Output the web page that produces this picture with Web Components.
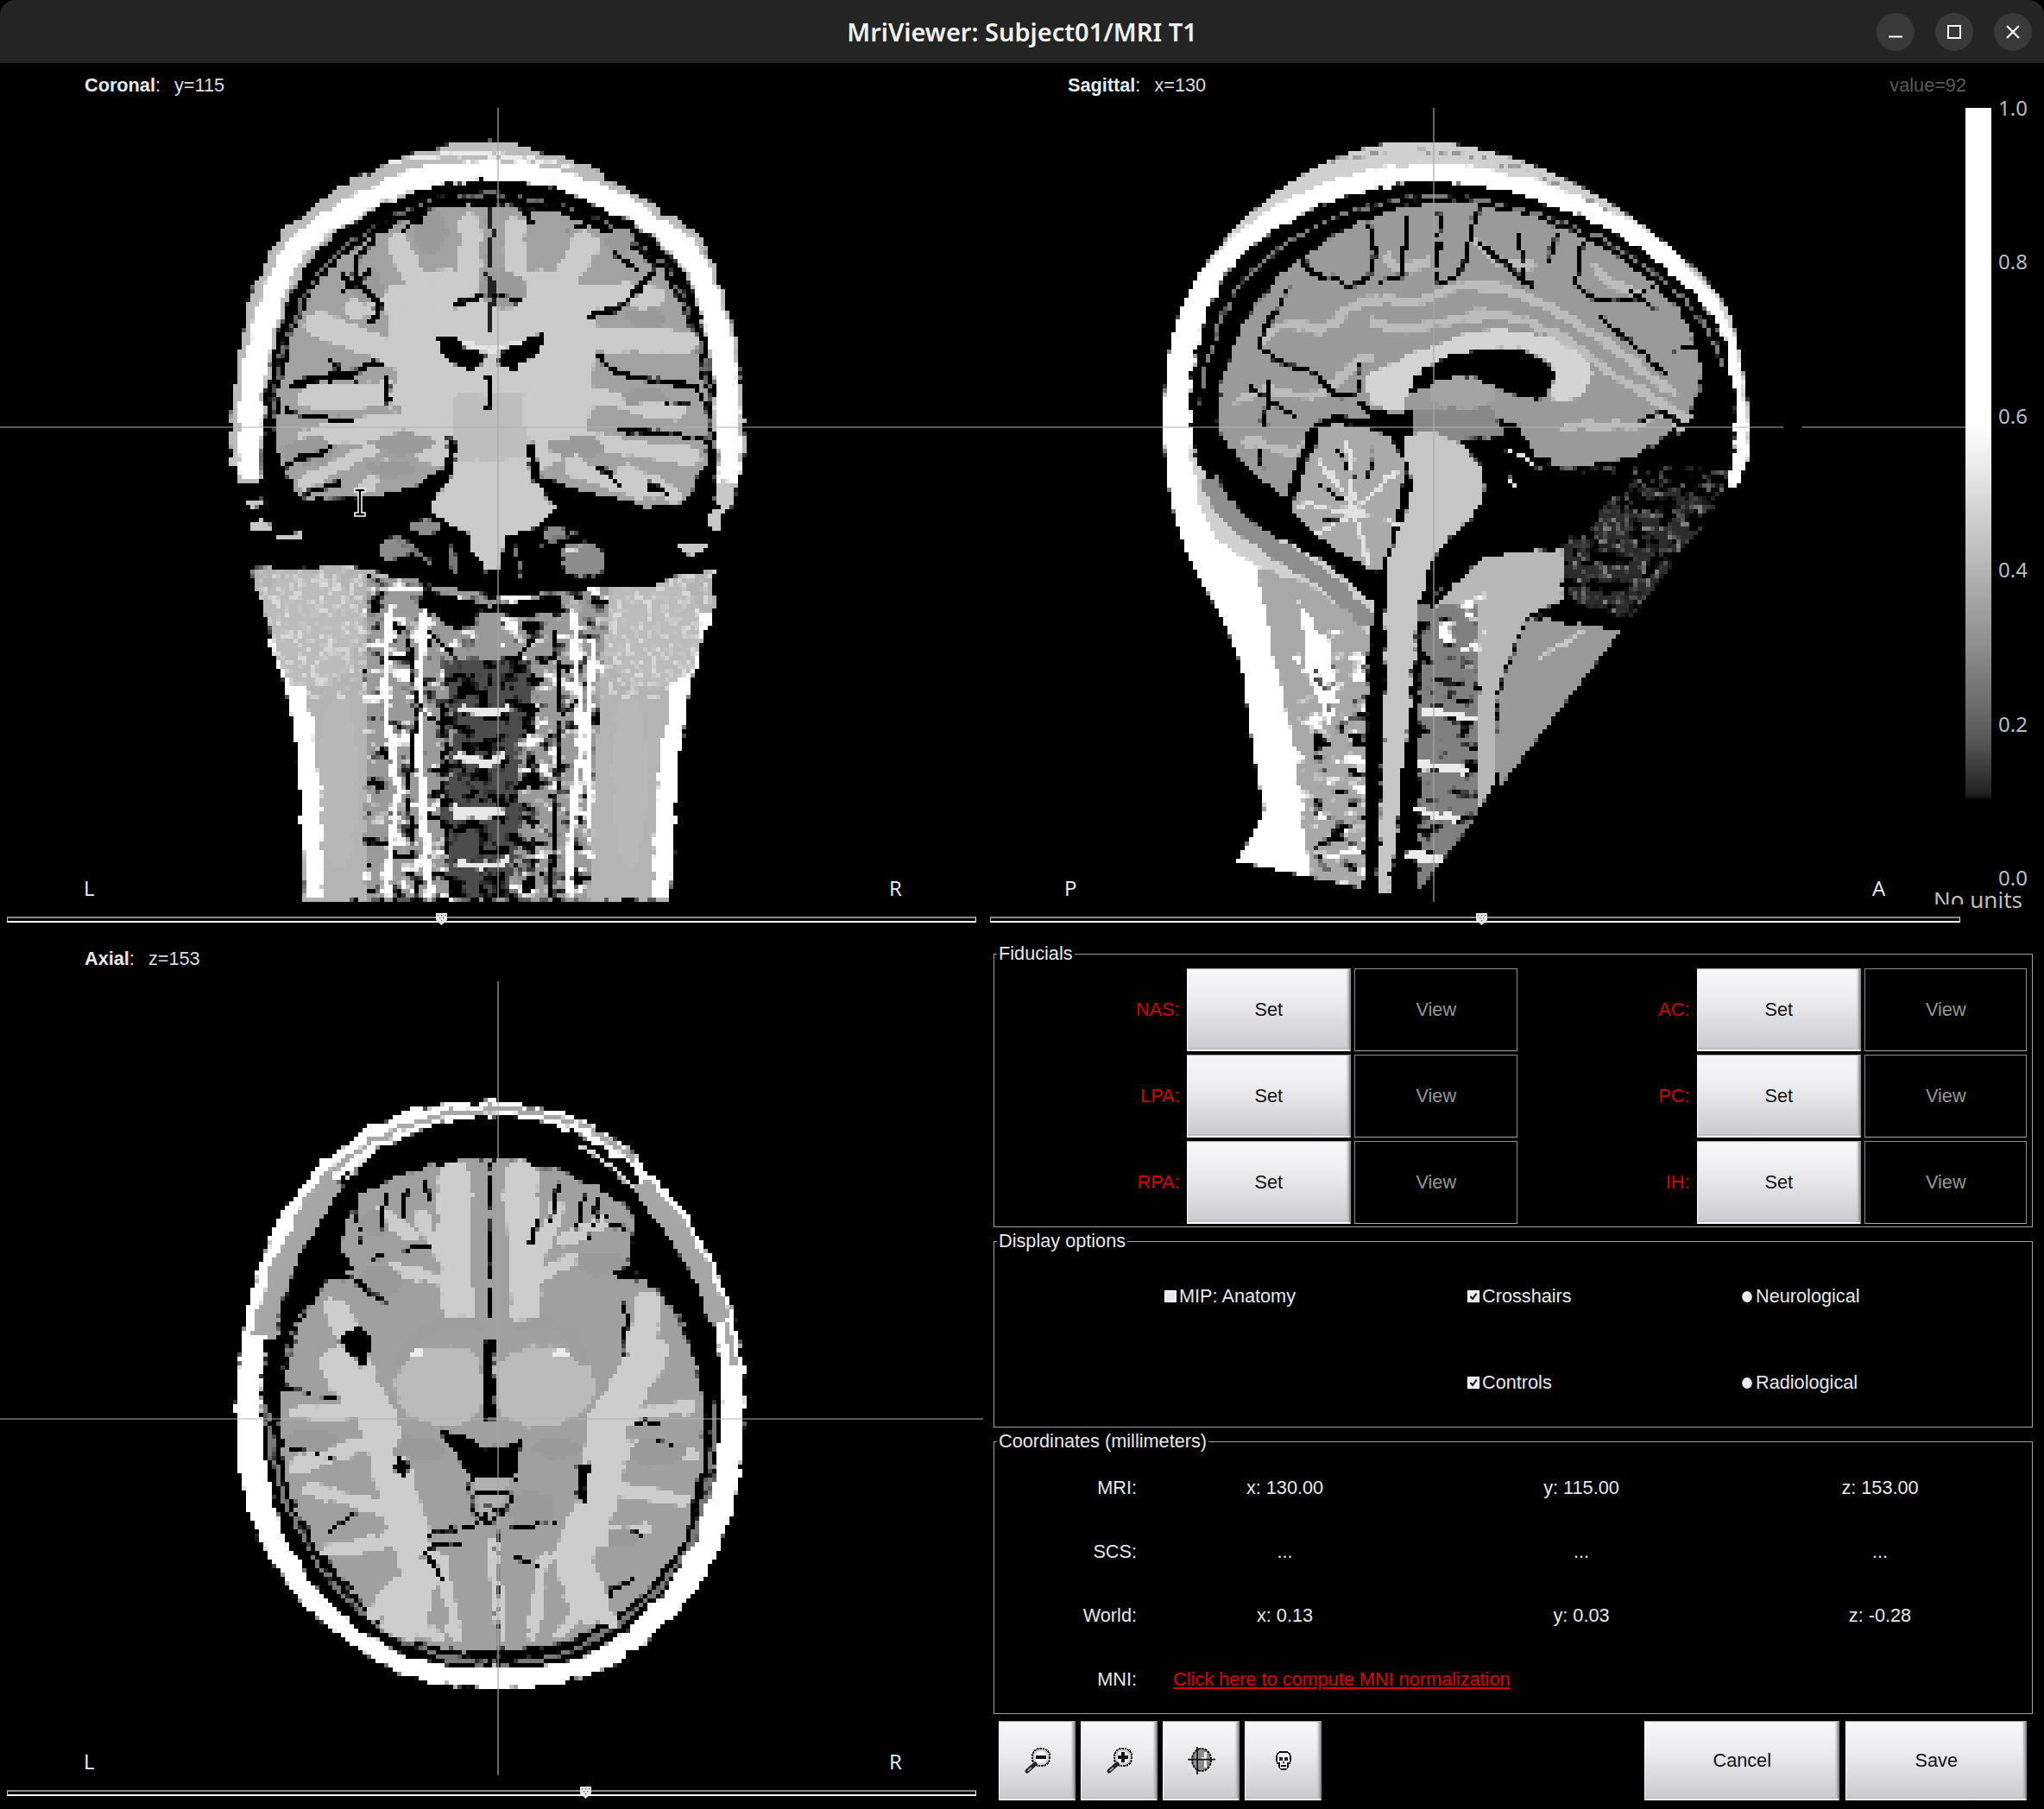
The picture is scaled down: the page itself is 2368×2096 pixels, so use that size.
<!DOCTYPE html>
<html><head><meta charset="utf-8"><title>MriViewer</title>
<style>
html,body{margin:0;padding:0;background:#000;}
body{width:2368px;height:2096px;overflow:hidden;font-family:"Liberation Sans",Arial,sans-serif;}
</style></head>
<body>
<mri-window>
  <mri-titlebar slot="title">MriViewer: Subject01/MRI T1</mri-titlebar>
  <mri-slice slot="coronal" name="Coronal" pos="y=115" left="L" right="R" lx="97" rx="1030" thumb="496" track-l="8" track-r="16">
    <mri-coronal></mri-coronal>
  </mri-slice>
  <mri-slice slot="sagittal" name="Sagittal" pos="x=130" left="P" right="A" lx="86" rx="1022" thumb="562" track-l="0" track-r="6" label-x="90" value="value=92">
    <mri-sagittal></mri-sagittal>
  </mri-slice>
  <mri-colorbar slot="colorbar"></mri-colorbar>
  <mri-slice slot="axial" name="Axial" pos="z=153" left="L" right="R" lx="97" rx="1030" thumb="663" track-l="8" track-r="16" head-top="10">
    <mri-axial></mri-axial>
  </mri-slice>
  <mri-panel slot="panel"></mri-panel>
</mri-window>

<script>
const def=(n,html,init)=>customElements.define(n,class extends HTMLElement{
  constructor(){super();this.attachShadow({mode:'open'});}
  connectedCallback(){if(!this.shadowRoot.firstChild)this.shadowRoot.innerHTML=typeof html==='function'?html(this):html;if(init)init(this);}
});

const FILT=(w,h,px)=>`<defs>
<filter id="pix" filterUnits="userSpaceOnUse" x="0" y="0" width="${w}" height="${h}" color-interpolation-filters="sRGB">
 <feFlood x="2" y="2" width="1" height="1" flood-color="#000"/>
 <feComposite x="0" y="0" width="${px}" height="${px}"/>
 <feTile result="a"/>
 <feComposite in="SourceGraphic" in2="a" operator="in"/>
 <feMorphology operator="dilate" radius="2"/>
</filter>
<filter id="wob" filterUnits="userSpaceOnUse" x="0" y="0" width="${w}" height="${h}" color-interpolation-filters="sRGB">
 <feTurbulence type="fractalNoise" baseFrequency=".05" numOctaves="2" seed="4" result="n"/>
 <feDisplacementMap in="SourceGraphic" in2="n" scale="13" xChannelSelector="R" yChannelSelector="G"/>
</filter>
<filter id="wobs" filterUnits="userSpaceOnUse" x="100" y="100" width="1200" height="1500" color-interpolation-filters="sRGB">
 <feTurbulence type="fractalNoise" baseFrequency=".04" numOctaves="2" seed="9" result="n"/>
 <feDisplacementMap in="SourceGraphic" in2="n" scale="15" xChannelSelector="R" yChannelSelector="G"/>
</filter>
<filter id="blk" x="0" y="0" width="1" height="1" color-interpolation-filters="sRGB">
 <feTurbulence type="fractalNoise" baseFrequency=".03 .05" numOctaves="2" seed="7"/>
 <feColorMatrix values="0 0 0 0 0 0 0 0 0 0 0 0 0 0 0 9 0 0 0 -5.1"/>
</filter>
<filter id="wht" x="0" y="0" width="1" height="1" color-interpolation-filters="sRGB">
 <feTurbulence type="fractalNoise" baseFrequency=".03 .05" numOctaves="2" seed="21"/>
 <feColorMatrix values="0 0 0 0 1 0 0 0 0 1 0 0 0 0 1 9 0 0 0 -5"/>
</filter>
<filter id="blk2" x="0" y="0" width="1" height="1" color-interpolation-filters="sRGB">
 <feTurbulence type="fractalNoise" baseFrequency=".045" numOctaves="2" seed="11"/>
 <feColorMatrix values="0 0 0 0 0 0 0 0 0 0 0 0 0 0 0 9 0 0 0 -4.5"/>
</filter>
<filter id="fine" x="0" y="0" width="1" height="1" color-interpolation-filters="sRGB">
 <feTurbulence type="fractalNoise" baseFrequency=".09" numOctaves="2" seed="3"/>
 <feColorMatrix values="0 0 0 0 1 0 0 0 0 1 0 0 0 0 1 6 0 0 0 -3.1"/>
</filter>
</defs>`;
const HOST=`<style>:host{display:block;width:100%;height:100%}svg{display:block;width:100%;height:100%}</style>`;

/* ---------- Coronal slice (drawn in the zoom coordinate frame) ---------- */
def('mri-coronal',HOST+`<svg viewBox="0 0 1147 920" width="1147" height="920">${FILT(1147,920,5)}
<clipPath id="neck"><path d="M410 1030C440 1120 470 1200 462 1487L1028 1487C1020 1300 1030 1180 1060 1100L1095 1000L1095 940L1000 965L760 985L530 935L388 940Z"/></clipPath>
<clipPath id="neckc"><path d="M560 950L940 950L920 1130L905 1487L560 1487Z"/></clipPath>
<g filter="url(#pix)"><g filter="url(#wob)"><g transform="translate(0,-125) scale(.7553,.7018)">
 <path fill="#bcbcbc" d="M355 740C352 600 380 470 435 380C520 300 620 238 740 234C860 235 990 320 1075 395C1120 480 1145 620 1140 760C1138 785 1133 800 1125 812L1105 812L1098 790L405 790L395 800L365 800Z"/>
 <path fill="none" stroke="#fff" stroke-width="33" d="M384 790C375 640 400 500 455 410C530 330 640 282 745 280C860 282 980 340 1055 415C1105 500 1125 640 1118 800"/>
 <path fill="none" stroke="#ececec" stroke-width="6" d="M600 270C660 250 800 248 880 280"/>
 <path fill="#000" d="M403 800C395 640 430 480 490 410C560 340 650 298 750 297C860 298 960 350 1035 425C1085 510 1105 640 1098 800L1075 870L1040 920L1000 975L760 985L520 950L430 880Z"/>
 <path fill="none" stroke="#6e6e6e" stroke-width="4" d="M417 720C417 600 450 490 510 425C580 360 660 322 750 320C860 322 950 370 1020 440C1070 520 1090 620 1090 720"/>
 <path fill="#a2a2a2" d="M425 720C425 620 445 510 510 440C570 385 650 340 745 338L755 338C860 340 950 385 1015 450C1065 520 1085 620 1085 720C1085 770 1070 810 1040 835C990 840 930 825 860 800C835 790 820 770 815 750L810 730L815 780C830 810 850 820 850 840C830 870 800 880 780 885L760 945L745 945L722 885C700 875 670 860 660 835C680 810 695 780 690 745C685 735 680 750 670 780C640 815 560 825 480 825C445 810 425 770 425 720Z"/>
 <!-- white matter -->
 <g fill="none" stroke="#cbcbcb" stroke-linecap="round" stroke-linejoin="round">
  <path stroke-width="170" d="M680 530L700 690M830 530L820 690"/>
  <path stroke-width="130" d="M750 700L750 810"/>
  <path stroke-width="34" d="M650 500L610 400M640 480L545 510M790 470L790 375M720 460L720 370"/>
  <path stroke-width="40" d="M620 590L490 535M620 650L480 655M600 700L475 725"/>
  <path stroke-width="24" d="M570 740L470 795M590 770L560 805"/>
  <path stroke-width="40" d="M850 500L900 400M870 490L1000 490M880 560L1050 565"/>
  <path stroke-width="28" d="M860 640L1040 682M890 725L1060 755M880 770L980 812M960 780L1030 818"/>
 </g>
 <path fill="#cbcbcb" d="M660 835C680 810 700 780 700 740L810 740C815 780 830 810 850 840C830 870 800 880 780 885L760 945L745 945L722 885C700 875 670 860 660 835Z"/>
 <path fill="#bebebe" d="M700 650L800 650L815 760L690 760Z"/>
 <!-- gray ribbons -->
 <g fill="#9a9a9a"><ellipse cx="620" cy="733" rx="46" ry="18"/><ellipse cx="885" cy="738" rx="44" ry="18"/><ellipse cx="600" cy="775" rx="38" ry="14"/><ellipse cx="660" cy="385" rx="26" ry="38"/><ellipse cx="770" cy="478" rx="38" ry="32"/><ellipse cx="470" cy="745" rx="38" ry="22"/><ellipse cx="990" cy="655" rx="35" ry="13"/><ellipse cx="565" cy="475" rx="22" ry="28"/><ellipse cx="950" cy="395" rx="20" ry="20"/><ellipse cx="990" cy="525" rx="30" ry="15"/></g>
 <!-- sulci -->
 <g fill="none" stroke="#000" stroke-linecap="round" stroke-linejoin="round" stroke-width="8">
  <path stroke-width="12" d="M452 635L520 618L585 600"/>
  <path d="M510 598L545 628M590 620L595 660"/>
  <path stroke-width="10" d="M575 400C552 420 530 440 552 470C570 490 600 510 570 528"/>
  <path d="M525 480L565 450M480 440L510 400M520 455L545 470"/>
  <path d="M440 680L540 695M435 770L510 740M470 810L520 800"/>
  <path stroke-width="10" d="M920 590L960 622L1020 628L1065 640"/>
  <path stroke-width="10" d="M1000 450L960 500L905 525"/>
  <path d="M945 420L975 445M1060 640L1075 660"/>
  <path d="M950 708L1080 725M1020 660L1060 672M1000 800L1020 820M920 770L950 800"/>
  <path d="M800 345L815 370M650 350L620 380M870 380L900 370"/>
  <path stroke-width="7" d="M695 505L745 485L795 495"/>
 </g>
 <path stroke="#222" stroke-width="8" d="M752 340L752 545"/>
 <path fill="#000" d="M672 555C690 550 710 570 742 585C745 605 725 625 705 600C690 600 670 580 672 555Z"/>
 <path fill="#000" d="M832 552C815 548 795 570 765 585C760 605 780 620 795 605C815 595 835 575 832 552Z"/>
 <path fill="none" stroke="#e4e4e4" stroke-width="7" d="M705 565Q752 590 800 562"/>
 <path stroke="#000" stroke-width="9" d="M750 620L750 680"/>
 <path fill="none" stroke="#000" stroke-width="13" d="M690 722C697 760 690 795 662 812M816 728C810 770 825 795 852 815"/>
 <!-- under-temporal dark region -->
 <g fill="#8c8c8c"><ellipse cx="610" cy="905" rx="26" ry="20"/><ellipse cx="895" cy="925" rx="35" ry="28"/><ellipse cx="650" cy="870" rx="24" ry="13"/><ellipse cx="850" cy="880" rx="18" ry="12"/></g>
 <g fill="none" stroke="#777" stroke-width="6"><path d="M600 880L660 930M830 900L880 880M690 900L700 950M790 900L800 960"/></g>
 <path stroke="#ddd" stroke-width="5" d="M860 915L890 905"/>
 <!-- scalp fragments -->
 <g fill="#c8c8c8"><ellipse cx="360" cy="763" rx="9" ry="10"/><ellipse cx="395" cy="830" rx="16" ry="6"/><ellipse cx="400" cy="868" rx="18" ry="10"/><ellipse cx="445" cy="885" rx="24" ry="7"/><ellipse cx="1110" cy="820" rx="16" ry="28"/><ellipse cx="1060" cy="905" rx="24" ry="10"/><ellipse cx="1095" cy="860" rx="10" ry="14"/></g>
 <!-- neck -->
 <path fill="#b4b4b4" d="M410 1030C440 1120 470 1200 462 1487L1028 1487C1020 1300 1030 1180 1060 1100L1095 1000L1095 940L1000 965L760 985L530 935L388 940Z"/>
 <path fill="none" stroke="#fff" stroke-width="30" d="M425 1050C450 1120 480 1200 482 1480M1078 1010C1050 1090 1025 1180 1015 1480"/>
 <g clip-path="url(#neck)">
  <g fill="#b8b8b8"><ellipse cx="520" cy="1290" rx="30" ry="145"/><ellipse cx="965" cy="1290" rx="28" ry="145"/></g>
  <ellipse cx="470" cy="1040" rx="85" ry="96" fill="#bcbcbc"/><ellipse cx="1000" cy="1040" rx="76" ry="96" fill="#bcbcbc"/>
  <rect x="380" y="930" width="730" height="220" filter="url(#fine)" opacity=".45"/>
  <g clip-path="url(#neckc)">
   <rect x="560" y="950" width="380" height="540" fill="#9a9a9a"/>
   <rect x="560" y="950" width="380" height="540" filter="url(#wht)"/>
   <rect x="560" y="950" width="380" height="540" filter="url(#blk)"/>
   <g fill="none" stroke="#fff" stroke-width="12"><path d="M600 1000L590 1150L610 1300L590 1480M650 1010L640 1200L660 1480M880 1010L890 1200L870 1480M910 1050L900 1250L920 1480"/></g>
   <g fill="none" stroke="#000" stroke-width="6"><path d="M622 1040L640 1160L625 1300L640 1480M852 1040L860 1200L845 1480M660 1040L700 1090M830 1040L790 1090"/></g>
   <path fill="#4c4c4c" d="M680 1090L810 1090L820 1190L790 1220L800 1340L780 1480L690 1480L680 1340L700 1200Z"/>
   <rect x="680" y="1090" width="140" height="390" filter="url(#blk2)"/>
   <path fill="#000" d="M650 970L750 1000L860 980L870 1010L800 1020L750 1010L700 1040L640 1000Z"/>
   <path fill="#999" d="M735 1010L765 1010L770 1090L730 1090Z"/>
   <g fill="none" stroke="#e8e8e8" stroke-width="14"><path d="M705 1165Q745 1190 785 1165M700 1245Q735 1270 775 1245M695 1335Q730 1355 775 1335M700 1420Q735 1440 780 1420"/></g>
  </g>
 </g>
</g></g></g>
<path d="M577 0V920" stroke="#a8a8a8" stroke-width="1.2"/>
<path d="M0 370H1147" stroke="#b4b4b4" stroke-width="1.2"/>
<g transform="translate(417,457)" fill="#000" stroke="#fff" stroke-width="1.5"><path d="M-6 -16H6V-12H2V12H6V16H-6V12H-2V-12H-6Z"/></g>
</svg>`);

/* ---------- Sagittal slice ---------- */
def('mri-sagittal',HOST+`<svg viewBox="0 0 1130 920" width="1130" height="920">${FILT(1130,920,5)}
<clipPath id="cut"><path d="M330 1422L372 1340C360 1280 350 1210 340 1120C330 1060 290 990 260 930C230 860 216 780 218 680C220 560 240 490 300 410C370 320 470 240 600 232C720 235 850 290 950 370C1010 420 1070 470 1090 530C1110 620 1120 700 1117 750L1100 795L1065 838L598 1487L545 1472Z"/></clipPath>
<g filter="url(#pix)"><g transform="translate(37,-125) scale(.7553,.7018)">
<g clip-path="url(#cut)"><g filter="url(#wobs)">
 <rect x="100" y="100" width="1200" height="1500" fill="#d0d0d0"/>
 <path fill="#fff" d="M300 1440L372 1340C360 1280 340 1210 330 1120C320 1060 280 990 250 930C220 860 206 780 208 680C210 560 230 490 290 425C360 345 470 278 620 270C740 270 870 320 960 380C1020 430 1090 500 1100 600C1110 680 1120 730 1105 790L1060 850L1085 790C1095 740 1095 660 1085 590C1070 510 1000 450 930 400C840 340 720 300 620 300C500 305 400 360 330 430C280 500 250 600 258 720C262 800 280 870 300 890L420 980L560 1480Z"/>
 <path fill="none" stroke="#999" stroke-width="4" stroke-dasharray="14 8" d="M330 340C420 270 520 245 620 250C730 255 830 300 920 360"/>
 <path fill="#000" d="M258 720C250 600 280 500 330 430C400 360 500 305 620 300C720 300 840 340 930 400C1000 450 1070 510 1085 590C1095 660 1095 740 1085 790L1065 850L930 1040L735 1310L700 1355L600 1500L545 1485L540 1000L480 940C420 890 340 880 290 820Z"/>
 <path fill="none" stroke="#7c7c7c" stroke-width="5" d="M275 690C275 580 310 490 370 430C440 370 520 330 630 325C740 325 850 370 930 420C1000 470 1060 530 1075 610"/>
 <path fill="none" stroke="#8e8e8e" stroke-width="30" d="M285 790C305 850 360 890 420 925C460 955 500 985 530 1030"/>
 <path fill="none" stroke="#000" stroke-width="8" d="M300 760C320 830 380 860 440 905"/>
 <!-- neck tissue -->
 <path fill="#a8a8a8" d="M360 940L430 960L500 1010L545 1060L565 1480L440 1450C430 1340 420 1200 385 1080Z"/>
 <path fill="#fff" d="M425 990L470 1060L485 1160L470 1200L440 1120Z"/>
 <rect x="420" y="1040" width="140" height="420" filter="url(#wht)"/>
 <rect x="450" y="1100" width="110" height="340" filter="url(#blk)"/>
 <path fill="#000" stroke="#000" d="M540 1000L560 1000L545 1480L525 1480L530 1100Z"/>
 <!-- brain -->
 <path fill="#9a9a9a" d="M300 690C305 600 340 510 410 440C480 380 560 338 640 335C760 335 880 390 960 460C1020 510 1045 570 1040 640C1030 690 990 730 930 755C880 772 830 770 800 770L760 700L700 680L600 680L520 690L460 700L420 830C370 800 300 740 300 690Z"/>
 <g fill="none" stroke="#bcbcbc" stroke-width="15" stroke-linecap="round" stroke-linejoin="round">
  <path d="M370 560C420 500 440 580 490 520C540 470 600 520 650 480C720 450 800 500 860 540C920 580 960 620 1000 650"/>
  <path d="M330 660C400 620 420 680 470 640C500 620 510 590 530 590"/>
  <path d="M560 420C560 450 600 450 620 430M700 400C720 440 750 430 780 440M880 440C900 480 930 470 950 490"/>
  <path d="M540 530C580 560 640 530 700 520C780 510 860 580 910 620C950 650 1000 670 1010 710"/>
  <path d="M830 710C880 690 920 720 960 690C990 670 1010 680 1020 690"/>
  <path d="M345 730C370 720 400 760 430 740"/>
 </g>
 <g fill="none" stroke="#000" stroke-width="7" stroke-linecap="round" stroke-linejoin="round">
  <path d="M430 425C440 470 470 440 490 470C540 480 550 400 530 372"/>
  <path d="M590 358L585 450L548 470M640 355C640 420 628 450 640 465C700 455 680 370 700 350"/>
  <path d="M700 400L780 470M760 385L772 470M820 385L810 430"/>
  <path d="M862 400L850 470C880 510 930 500 965 480M890 525L985 615M930 480L970 510M1000 580L1040 570"/>
  <path d="M412 480C400 500 370 530 362 570C400 620 440 590 470 640C500 680 525 640 520 600"/>
  <path d="M380 635L372 700M350 640L420 690M950 690C970 680 1000 680 1010 700M360 740L370 770"/>
 </g>
 <!-- cerebellum -->
 <path fill="#000" d="M450 695C500 680 580 690 600 760C600 830 580 890 560 960C500 940 420 890 400 840C410 790 430 740 450 695Z"/>
 <path fill="#aaa" d="M460 705C500 695 570 705 585 760C585 820 570 880 550 945C500 925 430 880 415 838C425 790 445 745 460 705Z"/>
 <g stroke="#e2e2e2" stroke-width="7" stroke-linecap="round"><path d="M510 845L500 725M510 845L462 765M510 845L430 835M510 845L450 885M510 845L530 930M510 845L572 865M510 845L572 780"/></g>
 <g stroke="#000" stroke-width="4"><path d="M480 740L510 790M455 800L490 825M540 730L530 790M460 860L490 860"/></g>
 <!-- callosum etc -->
 <path fill="#000" d="M600 610C660 575 750 565 790 590C830 610 825 650 790 660L735 645C700 615 640 625 595 650Z"/>
 <path fill="#d4d4d4" d="M530 630C540 600 600 585 640 565C700 535 780 540 830 565C870 585 885 620 860 650C840 668 810 664 810 652C830 630 820 600 780 580C720 565 650 585 610 610C595 630 600 650 585 670C560 688 525 665 530 630Z"/>
 <ellipse cx="675" cy="650" rx="50" ry="28" fill="#a4a4a4"/>
 <path fill="none" stroke="#000" stroke-width="12" d="M520 660C530 690 570 700 600 680"/>
 <path fill="#888" d="M600 680L720 670L740 720L600 730Z"/>
 <!-- brainstem & cord -->
 <path fill="#000" d="M720 730L820 760L770 800L700 900L640 1000L610 1480L590 1480L585 1000L640 880Z"/>
 <path fill="#c6c6c6" d="M590 720C620 700 680 730 705 770C715 820 700 860 660 880C630 920 610 960 605 1040C590 1200 580 1350 565 1470L545 1470C555 1300 555 1100 560 950C570 880 590 840 600 800C590 770 585 750 590 720Z"/>
 <path fill="none" stroke="#e6e6e6" stroke-width="8" d="M750 790Q760 830 800 810"/>
 <path fill="none" stroke="#e6e6e6" stroke-width="5" d="M740 740L790 765"/>
 <!-- face lower -->
 <path fill="#2c2c2c" d="M820 770L1050 820L1090 850L930 1040L840 1000L790 920L860 860Z"/>
 <rect x="790" y="770" width="300" height="270" filter="url(#fine)" opacity=".4"/>
 <rect x="790" y="770" width="300" height="270" filter="url(#blk2)"/>
 <path fill="#000" d="M800 770L920 790L880 860L860 880L780 910L720 900L730 820Z"/>
 <path fill="#b8b8b8" d="M710 920L830 905L830 990L780 1010L730 1130L725 1290L700 1340L640 1200L620 1010Z"/>
 <path fill="#000" d="M830 990L930 1025L915 1045L790 1020Z"/>
 <path fill="#999" d="M780 1020L925 1040L735 1310L725 1250L735 1130Z"/>
 <path stroke="#c8c8c8" stroke-width="8" d="M790 1090L860 1040"/>
 <!-- spine -->
 <rect x="610" y="1000" width="90" height="490" fill="#808080"/>
 <rect x="610" y="1000" width="90" height="490" filter="url(#blk)"/>
 <rect x="640" y="970" width="70" height="130" filter="url(#wht)"/>
 <g stroke="#ececec" stroke-width="13" stroke-linecap="round"><path d="M622 1175L690 1185M612 1262L675 1272M605 1338L665 1350M592 1412L640 1420"/></g>
</g></g>
</g></g>
<path d="M514 0V920" stroke="#a8a8a8" stroke-width="1.2"/>
<path d="M0 370H919M941 370H1130" stroke="#b4b4b4" stroke-width="1.2"/>
</svg>`);

/* ---------- Axial slice ---------- */
def('mri-axial',HOST+`<svg viewBox="0 0 1147 920" width="1147" height="920">${FILT(1147,920,5)}
<g filter="url(#pix)"><g filter="url(#wob)"><g transform="translate(0,-76) scale(.7337,.6607)">
 <path fill="#fff" d="M780 325C880 330 960 370 1020 440C1100 530 1160 660 1172 780C1180 880 1170 990 1150 1070C1120 1150 1080 1230 1000 1290C930 1345 860 1355 780 1355C700 1355 630 1340 570 1290C490 1230 440 1160 410 1090C385 1040 370 950 373 860C375 760 390 640 440 530C490 440 560 370 660 335Z"/>
 <path fill="none" stroke="#a8a8a8" stroke-width="9" d="M402 740C420 620 470 510 530 440C590 385 680 345 780 338C860 340 950 370 1000 430M1070 540C1120 620 1150 700 1160 790"/>
 <path fill="#000" d="M780 350C870 352 950 395 1000 450C1080 540 1130 670 1138 790C1145 900 1130 990 1100 1080C1070 1170 1000 1260 920 1300C850 1325 720 1325 650 1300C560 1260 490 1190 450 1090C420 1010 410 900 415 800C425 680 470 560 530 470C590 400 680 355 780 350Z"/>
 <path fill="none" stroke="#a6a6a6" stroke-width="34" d="M420 740C435 620 478 540 528 465M1010 470C1060 530 1115 620 1135 710"/>
 <path fill="none" stroke="#dcdcdc" stroke-width="6" d="M915 405C950 425 985 450 1000 485M545 465L578 425"/>
 <path fill="none" stroke="#7a7a7a" stroke-width="8" d="M425 860C425 990 470 1100 540 1190C590 1250 680 1308 780 1312C900 1310 985 1250 1055 1160C1115 1070 1132 960 1125 850"/>
 <path fill="none" stroke="#888" stroke-width="3" d="M445 800C460 700 500 650 560 635M1095 790C1080 700 1050 650 1000 625"/>
 <!-- brain -->
 <path fill="#a0a0a0" d="M770 425C700 420 640 460 580 480C535 530 530 590 560 620L515 640C480 700 440 800 440 860C440 960 460 1050 505 1110C550 1200 620 1270 720 1290L850 1285C950 1260 1020 1200 1060 1130C1100 1060 1115 960 1112 860C1105 790 1060 660 1020 640L975 630C1000 590 1010 540 990 510C940 470 860 425 770 425Z"/>
 <g fill="none" stroke="#cdcdcd" stroke-linecap="round" stroke-linejoin="round">
  <path stroke-width="52" d="M722 690L716 455M830 690L822 455"/>
  <path stroke-width="24" d="M665 530L700 600M880 510L850 600M625 620L700 640M905 600L840 640M600 520L650 560M950 540L890 570"/>
  <path stroke-width="40" d="M530 690L575 810M1025 680L1000 800"/>
  <path stroke-width="62" d="M535 790L595 875L625 1000L665 1150L640 1240M1025 770L960 880L950 1000L905 1130L930 1210"/>
  <path stroke-width="26" d="M590 870L470 870M580 925L470 965M605 1040L490 1005M612 1095L520 1115M630 1170L590 1225"/>
  <path stroke-width="26" d="M960 880L1085 860M960 930L1092 945M950 1000L1080 1025M930 1090L1020 1075M900 1170L965 1235"/>
  <path stroke-width="18" d="M700 1130L720 1265M860 1120L840 1260M780 1100L790 1270M640 1240L690 1265M930 1210L880 1260M620 1215L610 1245"/>
 </g>
 <g fill="#bbbbbb"><ellipse cx="700" cy="825" rx="75" ry="68"/><ellipse cx="855" cy="825" rx="82" ry="72"/></g>
 <g fill="none" stroke="#9e9e9e" stroke-width="20"><path d="M630 790C650 720 720 690 760 725M815 725C850 690 910 720 925 790"/></g>
 <g fill="#ececec"><ellipse cx="660" cy="768" rx="14" ry="8"/><ellipse cx="888" cy="768" rx="14" ry="9"/></g>
 <g fill="#9a9a9a"><ellipse cx="490" cy="920" rx="48" ry="16"/><ellipse cx="1040" cy="940" rx="48" ry="24"/><ellipse cx="985" cy="1090" rx="30" ry="18"/><ellipse cx="660" cy="935" rx="40" ry="20"/><ellipse cx="880" cy="935" rx="40" ry="18"/><ellipse cx="840" cy="1040" rx="38" ry="30"/><ellipse cx="600" cy="640" rx="36" ry="24"/><ellipse cx="950" cy="610" rx="40" ry="20"/><ellipse cx="590" cy="540" rx="22" ry="26"/></g>
 <g fill="none" stroke="#000" stroke-linecap="round" stroke-linejoin="round" stroke-width="6">
  <path d="M560 640L610 680M510 640C540 628 570 630 580 650M590 600L620 590L680 580M560 510L570 570M610 490L600 560M640 480L640 530M880 470L870 540M920 490L915 550M1000 590L1030 600M850 530L840 570M945 500L930 570M960 530L990 555M675 470L670 520"/>
  <path d="M445 830L535 850M460 935L530 950M520 1080L565 1045M975 630C1010 625 1040 640 1060 680M985 680L990 770M1000 890L1042 890M1040 920L1062 925M990 1070L1015 1085"/>
  <path d="M680 1085L750 1068M800 1070L880 1065M670 1125C680 1100 700 1090 730 1100M675 1130L700 1155M810 1120L850 1140M770 1000L770 1060M520 1160L560 1180M1000 1160L960 1190"/>
 </g>
 <path fill="#000" d="M540 735C560 715 585 725 585 745L575 805L560 775L535 750Z"/>
 <path fill="#000" d="M625 945L650 965L640 990L622 975ZM910 960L930 960L922 1035L908 1020Z"/>
 <path stroke="#000" stroke-width="5" d="M773 430V700"/>
 <path stroke="#000" stroke-width="20" d="M773 745V880"/>
 <path fill="#000" d="M690 895L770 935L830 915L810 985L745 985Z"/>
 <path fill="#b0b0b0" d="M752 985H805L785 1050H760Z"/>
 <path fill="none" stroke="#000" stroke-width="5" d="M745 985C735 1040 755 1070 780 1062C800 1040 815 1000 812 980M755 1015H800M760 1040H795"/>
 <path stroke="#333" stroke-width="4" d="M785 1070V1300"/>
</g></g></g>
<path d="M577 0V920" stroke="#a8a8a8" stroke-width="1.2"/>
<path d="M0 507H1139" stroke="#b4b4b4" stroke-width="1.2"/>
</svg>`);

/* ---------- Slice view ---------- */
def('mri-slice',el=>{
 const g=a=>el.getAttribute(a);
 return `<style>
 :host{display:flex;flex-direction:column;height:100%;color:#e8e8e8;font:21.7px "Liberation Sans",Arial,sans-serif;}
 .head{height:${52+(+g('head-top')||0)}px;box-sizing:border-box;flex:none;display:flex;align-items:center;padding-left:${g('label-x')||98}px;padding-top:${g('head-top')||0}px;white-space:pre;}
 b{font-weight:700}.pos{margin-left:16px;color:#ddd}
 .val{margin-left:auto;color:#5a5a5a;margin-right:-1px}
 .img{position:relative;height:920px;flex:none}
 .mark{position:absolute;top:889px;font:24px/30px "Open Sans","Noto Sans",sans-serif;color:#f0f0f0}
 .slide{flex:1;padding:17px ${g('track-r')}px 0 ${g('track-l')}px;}
 .track{position:relative;height:3px;background:#000;border-top:2px solid #888;border-bottom:2px solid #fff;border-left:1.5px solid #bbb;border-right:1.5px solid #fff}
 svg{position:absolute;top:-6px;left:${g('thumb')}px;display:block}
 </style>
 <div class="head"><b>${g('name')}</b>:<span class="pos">${g('pos')}</span>${g('value')?`<span class="val">${g('value')}</span>`:''}</div>
 <div class="img"><slot></slot><span class="mark" style="left:${g('lx')}px">${g('left')}</span><span class="mark" style="left:${g('rx')}px">${g('right')}</span></div>
 <div class="slide"><div class="track"><svg width="13" height="14" viewBox="0 0 13 14"><path d="M0 0H13V8L6.5 14L0 8Z" fill="#e9e9e9"/><g fill="#555"><rect x="2" y="2" width="1.3" height="1.3"/><rect x="6" y="2" width="1.3" height="1.3"/><rect x="10" y="2" width="1.3" height="1.3"/><rect x="4" y="5" width="1.3" height="1.3"/><rect x="8" y="5" width="1.3" height="1.3"/><rect x="6" y="8" width="1.3" height="1.3"/></g></svg></div></div>`;
});

/* ---------- Colour bar ---------- */
def('mri-colorbar',`<style>
:host{display:block;height:100%;position:relative;z-index:2;font:24px "Noto Sans","Open Sans",sans-serif;color:#bdbdbd}
.row{display:flex;margin-top:52px;height:892px}
.bar{width:30px;flex:none;background:linear-gradient(to bottom,#fff 0%,#fff 41%,#e8e8e8 47%,#b8b8b8 59%,#888 71%,#585858 82%,#222 89%,#000 90%,#000 100%)}
.t{margin:-16px 0 -16px 8px;display:flex;flex-direction:column;justify-content:space-between;line-height:32px}
.u{display:flex;justify-content:flex-end;padding-right:25px;font-size:26px;line-height:34px;white-space:pre;margin-left:-60px;height:34px;margin-top:8px}
.no{clip-path:inset(0 0 11px 0);display:inline-block}
</style>
<div class="row"><div class="bar"></div><div class="t"><span>1.0</span><span>0.8</span><span>0.6</span><span>0.4</span><span>0.2</span><span>0.0</span></div></div>
<div class="u"><span class="no">No</span> units</div>`);

/* ---------- Title bar ---------- */
def('mri-titlebar',`<style>
:host{display:flex;align-items:center;justify-content:center;position:relative;height:73px;background:#242424;border-radius:18px 18px 0 0;color:#f2f2f2;font:600 29px "Noto Sans","Open Sans",sans-serif}
.btns{position:absolute;right:14px;top:15px;display:flex;gap:24px}
.b{width:44px;height:44px;border-radius:50%;background:#393939;display:flex;align-items:center;justify-content:center}
svg{display:block}
</style><slot></slot>
<div class="btns">
<div class="b"><svg width="16" height="16" viewBox="0 0 16 16"><path d="M0 13.5H16" stroke="#fff" stroke-width="2"/></svg></div>
<div class="b"><svg width="16" height="16" viewBox="0 0 16 16"><rect x="1" y="1" width="14" height="14" fill="none" stroke="#fff" stroke-width="2"/></svg></div>
<div class="b"><svg width="16" height="16" viewBox="0 0 16 16"><path d="M1 1L15 15M15 1L1 15" stroke="#fff" stroke-width="2.2"/></svg></div>
</div>`);

/* ---------- Buttons ---------- */
def('mri-btn',`<style>
:host{display:flex;align-items:center;justify-content:center;box-sizing:border-box;color:#111;font:21.7px "Liberation Sans",Arial,sans-serif;padding:0 0 0 1.5px;
 background:linear-gradient(#f7f7f9 0,#eeeef1 35%,#cbcbcf 100%);
 border-style:solid;border-width:1.5px 2px 2px 1.5px;border-color:#a8a8a8 #8f8f8f #fff #fff;box-shadow:inset -2px -1px 2px #b4b4b8}
:host([ghost]){background:#000;color:#959595;border:1.5px solid #8c8c8c;border-bottom-color:#a8a8a8;box-shadow:none}
</style><slot></slot>`);

/* ---------- Fieldset ---------- */
def('mri-group',el=>`<style>
:host{display:block;color:#e8e8e8;font:21.7px/24px "Liberation Sans",Arial,sans-serif}
fieldset{margin:0;padding:0;border:1.5px solid #a0a0a0;height:${el.getAttribute('h')}px;box-sizing:border-box}
legend{padding:0 2px;margin-left:3px;line-height:24px;height:24px}
</style><fieldset><legend>${el.getAttribute('legend')}</legend><slot></slot></fieldset>`);

def('mri-check',el=>`<style>:host{display:flex;align-items:center;color:#e8e8e8;font:21.7px "Liberation Sans",Arial,sans-serif;white-space:nowrap;height:100%}
svg{display:block;margin-right:3px;flex:none}</style>
${el.hasAttribute('radio')?`<svg width="14" height="15" viewBox="0 0 14 15"><ellipse cx="7" cy="7.5" rx="5.8" ry="6.5" fill="#ececf0"/></svg>`:
`<svg width="14" height="14" viewBox="0 0 14 14"><rect x=".7" y=".7" width="12.6" height="12.6" fill="#e8e8ee" stroke="#fff" stroke-width="1.4"/>${el.hasAttribute('checked')?'<path d="M3.4 7L6 10L10.6 3.6" fill="none" stroke="#111" stroke-width="2"/>':''}</svg>`}<slot></slot>`);

/* ---------- Icons ---------- */
const LENS=s=>`<svg width="32" height="32" viewBox="0 0 32 32" shape-rendering="crispEdges">
<defs><radialGradient id="l" cx=".5" cy=".5" r=".55"><stop offset=".45" stop-color="#fff"/><stop offset="1" stop-color="#9a9a9a"/></radialGradient></defs>
<circle cx="20" cy="12" r="10.5" fill="url(#l)" stroke="#222" stroke-width="2" stroke-dasharray="2.4 1"/>
<path d="M13 20L4 28" stroke="#222" stroke-width="5" shape-rendering="auto" stroke-linecap="round"/>
<path d="M9 24L4.5 28" stroke="#999" stroke-width="2" shape-rendering="auto"/>
${s}</svg>`;
const ICONS={
 minus:LENS('<rect x="14" y="10" width="12" height="4" fill="#111"/>'),
 plus:LENS('<rect x="14" y="10" width="12" height="4" fill="#111"/><rect x="18" y="6" width="4" height="12" fill="#111"/>'),
 cross:`<svg width="32" height="32" viewBox="0 0 32 32"><ellipse cx="16" cy="15" rx="11" ry="13" fill="#8c8c8c" stroke="#111" stroke-width="2" stroke-dasharray="3 1"/><rect x="19" y="6" width="3" height="18" fill="#eee"/><rect x="16" y="12" width="6" height="3" fill="#eee"/><rect x="9" y="6" width="3" height="18" fill="#aaa"/><path d="M0 14.7H32M11 0V32" stroke="#111" stroke-width="1.8"/></svg>`,
 skull:`<svg width="18" height="22" viewBox="0 0 18 22" shape-rendering="crispEdges" fill="none"><path d="M5 1H13L16 3L17 6V11L16 14H14V19L12 21H6L4 19V14H2L1 11V6L2 3Z" stroke="#111" stroke-width="1.4" fill="#f0f0f2"/><rect x="4" y="7" width="4" height="4" fill="#222"/><rect x="10" y="7" width="4" height="4" fill="#222"/><rect x="8" y="12" width="2" height="2" fill="#222"/><path d="M6 17H12" stroke="#111" stroke-width="1.4"/></svg>`
};
def('mri-icon',el=>`<style>:host{display:block}svg{display:block}</style>${ICONS[el.getAttribute('name')]}`);

/* ---------- Right control panel ---------- */
def('mri-panel',`<style>
:host{display:flex;flex-direction:column;padding:18px 13px 0 4px;box-sizing:border-box;height:100%;gap:4px}
.fid{display:grid;grid-template-columns:218px 190px 189px 200px 190px 188px;grid-auto-rows:96px;gap:4px;padding-top:5px;margin-left:.5px}
.r{display:flex;align-items:center;justify-content:flex-end;padding-right:4px;color:#d40000}
.disp{display:grid;grid-template-columns:351px 317px auto;grid-auto-rows:100px;padding:2px 0 0 197px}
.coord{display:grid;grid-template-columns:165px 343px 344px 348px;grid-auto-rows:74px;padding-top:5px}
.coord>span{display:flex;align-items:center;justify-content:center}
.coord>span.l{justify-content:flex-end}
.coord>a{grid-column:2/5;display:flex;align-items:center;padding-left:42px;color:#e00000;text-decoration:underline}
.foot{display:flex;margin-top:4px;padding-left:6px;padding-right:7px;height:92px;gap:6px}
mri-btn.ic{width:89px}
</style>
<mri-group legend="Fiducials" h="329"><div class="fid">
 <span class="r">NAS:</span><mri-btn>Set</mri-btn><mri-btn ghost>View</mri-btn><span class="r">AC:</span><mri-btn>Set</mri-btn><mri-btn ghost>View</mri-btn>
 <span class="r">LPA:</span><mri-btn>Set</mri-btn><mri-btn ghost>View</mri-btn><span class="r">PC:</span><mri-btn>Set</mri-btn><mri-btn ghost>View</mri-btn>
 <span class="r">RPA:</span><mri-btn>Set</mri-btn><mri-btn ghost>View</mri-btn><span class="r">IH:</span><mri-btn>Set</mri-btn><mri-btn ghost>View</mri-btn>
</div></mri-group>
<mri-group legend="Display options" h="228"><div class="disp">
 <mri-check>MIP: Anatomy</mri-check><mri-check checked>Crosshairs</mri-check><mri-check radio>Neurological</mri-check>
 <span></span><mri-check checked>Controls</mri-check><mri-check radio>Radiological</mri-check>
</div></mri-group>
<mri-group legend="Coordinates (millimeters)" h="328"><div class="coord">
 <span class="l">MRI:</span><span>x: 130.00</span><span>y: 115.00</span><span>z: 153.00</span>
 <span class="l">SCS:</span><span>...</span><span>...</span><span>...</span>
 <span class="l">World:</span><span>x: 0.13</span><span>y: 0.03</span><span>z: -0.28</span>
 <span class="l">MNI:</span><a>Click here to compute MNI normalization</a>
</div></mri-group>
<div class="foot">
 <mri-btn class="ic"><mri-icon name="minus"></mri-icon></mri-btn><mri-btn class="ic"><mri-icon name="plus"></mri-icon></mri-btn><mri-btn class="ic"><mri-icon name="cross"></mri-icon></mri-btn><mri-btn class="ic"><mri-icon name="skull"></mri-icon></mri-btn>
 <mri-btn style="width:226px;margin-left:auto">Cancel</mri-btn><mri-btn style="width:210px;margin-left:1px">Save</mri-btn>
</div>`);

/* ---------- Window ---------- */
def('mri-window',`<style>
:host{display:grid;width:2368px;height:2096px;background:#000;grid-template-columns:1147px 1130px 91px;grid-template-rows:73px 1002px 1021px}
::slotted([slot=title]){grid-column:1/4}
</style>
<slot name="title"></slot><slot name="coronal"></slot><slot name="sagittal"></slot><slot name="colorbar"></slot><slot name="axial"></slot>
<div style="grid-column:2/4;min-width:0"><slot name="panel"></slot></div>`);
</script>
</body></html>
